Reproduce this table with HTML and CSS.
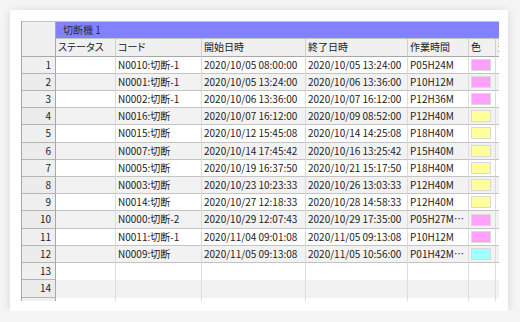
FILE: index.html
```html
<!DOCTYPE html>
<html lang="ja">
<head>
<meta charset="utf-8">
<link rel="stylesheet" href="styles.css">
</head>
<body>
<div class="card">
  <div class="frame">
    <div class="grid">
      <div class="corner"></div>
      <div class="group">切断機 1</div>

      <div class="hd">ステータス</div>
      <div class="hd">コード</div>
      <div class="hd">開始日時</div>
      <div class="hd">終了日時</div>
      <div class="hd">作業時間</div>
      <div class="hd">色</div>
      <div class="hd">進捗</div>

      <div class="rh">1</div><div class="c"></div><div class="c">N0010:切断-1</div><div class="c">2020/10/05 08:00:00</div><div class="c">2020/10/05 13:24:00</div><div class="c">P05H24M</div><div class="c sw"><span class="swatch pink"></span></div><div class="c"></div>
      <div class="rh alt">2</div><div class="c alt"></div><div class="c alt">N0001:切断-1</div><div class="c alt">2020/10/05 13:24:00</div><div class="c alt">2020/10/06 13:36:00</div><div class="c alt">P10H12M</div><div class="c sw alt"><span class="swatch pink"></span></div><div class="c alt"></div>
      <div class="rh">3</div><div class="c"></div><div class="c">N0002:切断-1</div><div class="c">2020/10/06 13:36:00</div><div class="c">2020/10/07 16:12:00</div><div class="c">P12H36M</div><div class="c sw"><span class="swatch pink"></span></div><div class="c"></div>
      <div class="rh alt">4</div><div class="c alt"></div><div class="c alt">N0016:切断</div><div class="c alt">2020/10/07 16:12:00</div><div class="c alt">2020/10/09 08:52:00</div><div class="c alt">P12H40M</div><div class="c sw alt"><span class="swatch yellow"></span></div><div class="c alt"></div>
      <div class="rh">5</div><div class="c"></div><div class="c">N0015:切断</div><div class="c">2020/10/12 15:45:08</div><div class="c">2020/10/14 14:25:08</div><div class="c">P18H40M</div><div class="c sw"><span class="swatch yellow"></span></div><div class="c"></div>
      <div class="rh alt">6</div><div class="c alt"></div><div class="c alt">N0007:切断</div><div class="c alt">2020/10/14 17:45:42</div><div class="c alt">2020/10/16 13:25:42</div><div class="c alt">P15H40M</div><div class="c sw alt"><span class="swatch yellow"></span></div><div class="c alt"></div>
      <div class="rh">7</div><div class="c"></div><div class="c">N0005:切断</div><div class="c">2020/10/19 16:37:50</div><div class="c">2020/10/21 15:17:50</div><div class="c">P18H40M</div><div class="c sw"><span class="swatch yellow"></span></div><div class="c"></div>
      <div class="rh alt">8</div><div class="c alt"></div><div class="c alt">N0003:切断</div><div class="c alt">2020/10/23 10:23:33</div><div class="c alt">2020/10/26 13:03:33</div><div class="c alt">P12H40M</div><div class="c sw alt"><span class="swatch yellow"></span></div><div class="c alt"></div>
      <div class="rh">9</div><div class="c"></div><div class="c">N0014:切断</div><div class="c">2020/10/27 12:18:33</div><div class="c">2020/10/28 14:58:33</div><div class="c">P12H40M</div><div class="c sw"><span class="swatch yellow"></span></div><div class="c"></div>
      <div class="rh alt">10</div><div class="c alt"></div><div class="c alt">N0000:切断-2</div><div class="c alt">2020/10/29 12:07:43</div><div class="c alt">2020/10/29 17:35:00</div><div class="c alt">P05H27M10S</div><div class="c sw alt"><span class="swatch pink"></span></div><div class="c alt"></div>
      <div class="rh">11</div><div class="c"></div><div class="c">N0011:切断-1</div><div class="c">2020/11/04 09:01:08</div><div class="c">2020/11/05 09:13:08</div><div class="c">P10H12M</div><div class="c sw"><span class="swatch pink"></span></div><div class="c"></div>
      <div class="rh alt">12</div><div class="c alt"></div><div class="c alt">N0009:切断</div><div class="c alt">2020/11/05 09:13:08</div><div class="c alt">2020/11/05 10:56:00</div><div class="c alt">P01H42M52S</div><div class="c sw alt"><span class="swatch cyan"></span></div><div class="c alt"></div>
      <div class="rh">13</div><div class="e"></div><div class="e"></div><div class="e"></div><div class="e"></div><div class="e"></div><div class="e"></div><div class="e"></div>
      <div class="rh alt">14</div><div class="e alt"></div><div class="e alt"></div><div class="e alt"></div><div class="e alt"></div><div class="e alt"></div><div class="e alt"></div><div class="e alt"></div>
      <div class="rh"></div><div class="e"></div><div class="e"></div><div class="e"></div><div class="e"></div><div class="e"></div><div class="e"></div><div class="e"></div>
    </div>
  </div>
</div>
</body>
</html>
```

FILE: styles.css
```css
html, body {
  margin: 0;
  padding: 0;
}
body {
  background: #f5f5f5;
  font-family: "Noto Sans CJK JP", "Noto Sans", sans-serif;
  font-size: 10px;
  color: #222;
  font-feature-settings: "palt";
}
.card {
  margin: 10px 0 0 10px;
  width: 498px;
  height: 301px;
  box-sizing: border-box;
  padding: 11px 0 0 11px;
  background: #fff;
  box-shadow: 0 1px 9px rgba(0, 0, 0, 0.13);
}
.frame {
  width: 478px;
  height: 280px;
  overflow: hidden;
  border-top: 1px solid #9ed6d6;
  border-left: 1px solid #a8a8a8;
  box-sizing: border-box;
}
.grid {
  display: grid;
  grid-template-columns: 34px 60px 86px 104px 102px 61px 27px 40px;
  grid-template-rows: 17px 17.5px;
  grid-auto-rows: 17.23px;
  width: 514px;
}
.grid > div {
  box-sizing: border-box;
  white-space: nowrap;
  overflow: hidden;
  line-height: 16px;
}
.corner {
  grid-row: span 2;
  background: #f0f0f0;
  border-right: 1px solid #a8a8a8;
  border-bottom: 1px solid #a8a8a8;
}
.group {
  grid-column: span 7;
  background: #8282ff;
  padding-left: 7px;
  border-bottom: 1px solid #c4c4c4;
  color: #2a2a40;
}
.hd {
  background: #f0f0f0;
  padding-left: 2px;
  border-right: 1px solid #cfcfcf;
  border-bottom: 1px solid #a8a8a8;
}
.rh {
  background: #f0f0f0;
  text-align: right;
  padding-right: 4px;
  border-right: 1px solid #a8a8a8;
  border-bottom: 1px solid #b4b4b4;
}
.rh.alt {
  background: #ececec;
}
.c {
  padding-left: 2px;
  border-right: 1px solid #dcdcdc;
  border-bottom: 1px solid #c4c4c4;
  text-overflow: ellipsis;
}
.e {
  border-right: 1px solid #dcdcdc;
}
.alt.c, .alt.e {
  background: #f2f2f2;
}
.sw {
  display: flex;
  align-items: center;
  padding-left: 2px;
}
.swatch {
  width: 20px;
  height: 12px;
  box-sizing: border-box;
  border: 1px solid #dadada;
}
.pink { background: #ffa0ff; }
.yellow { background: #ffff9c; }
.cyan { background: #a0ffff; }
```
